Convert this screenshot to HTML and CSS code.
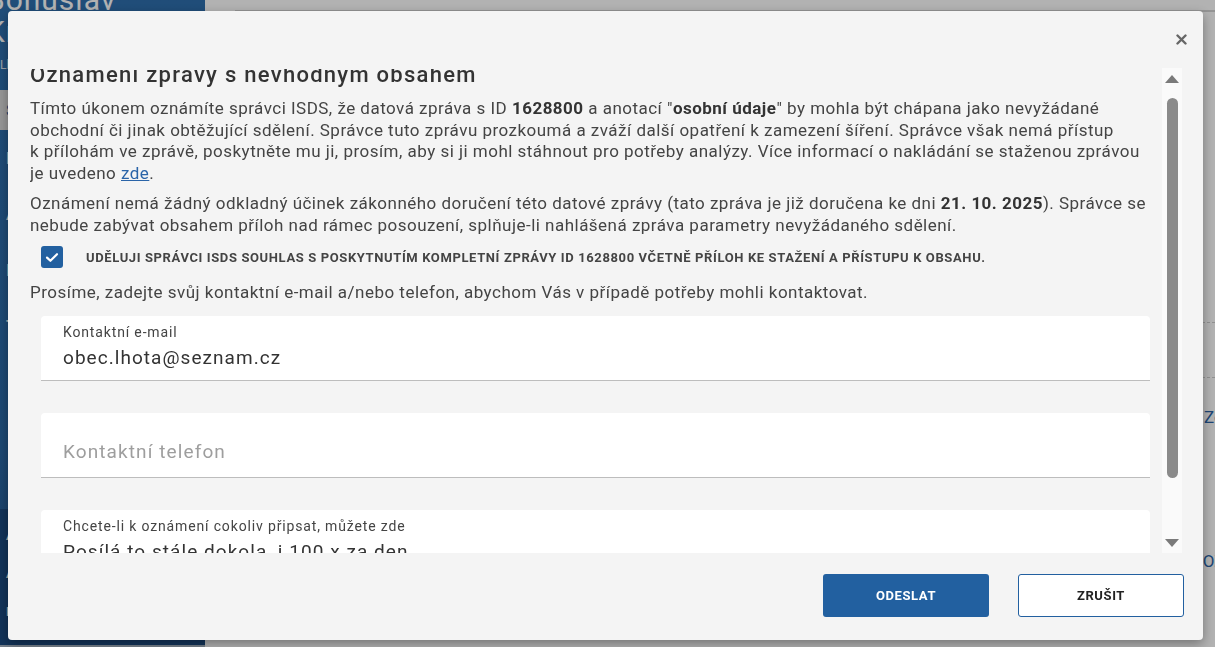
FILE: index.html
```html
<!DOCTYPE html>
<html lang="cs">
<head>
    <meta charset="UTF-8">
    <meta name="viewport" content="width=device-width, initial-scale=1.0">
    <title>Datová schránka - Oznámení zprávy</title>
    <link rel="stylesheet" href="styles.css">
</head>
<body>

<div class="app">
    <aside class="sidebar">
        <div class="user">
            <div class="user-name">Bohuslav<br>Kratochvíl</div>
            <div class="user-box">Lhota</div>
        </div>
        <div class="menu-item menu-item-light">SCHRÁNKA</div>
        <div class="menu-item">ÉHLED</div>
        <div class="menu-item">ARCHIV</div>
        <div class="menu-item">IMPORT</div>
        <div class="menu-item">TISK</div>
        <div class="sidebar-bottom">
            <div class="menu-item">ADRESÁŘ</div>
            <div class="menu-item">A NASTAVENÍ</div>
            <div class="menu-item">EXPORT</div>
        </div>
    </aside>
    <main class="main">
        <div class="topbar"></div>
        <div class="list">
            <div class="list-row"></div>
            <div class="list-row"></div>
            <div class="list-link">Zobrazit</div>
            <div class="list-link list-link-low">POŽADAVKY</div>
        </div>
    </main>
</div>

<div class="overlay">
    <div class="dialog">
        <div class="dialog-head">
            <button class="close-btn" title="Zavřít">
                <svg width="11" height="11" viewBox="0 0 11 11">
                    <path d="M1.5 1.5 L9.5 9.5 M9.5 1.5 L1.5 9.5" stroke="#666" stroke-width="2.4" stroke-linecap="round"/>
                </svg>
            </button>
        </div>

        <div class="dialog-body">
            <div class="scroll-view">
                <div class="scroll-content">
                    <h2>Oznámení zprávy s nevhodným obsahem</h2>
                    <p>Tímto úkonem oznámíte správci ISDS, že datová zpráva s&nbsp;ID <b>1628800</b> a&nbsp;anotací "<b>osobní údaje</b>" by mohla být chápana jako nevyžádané obchodní či jinak obtěžující sdělení. Správce tuto zprávu prozkoumá a&nbsp;zváží další opatření k&nbsp;zamezení šíření. Správce však nemá přístup k&nbsp;přílohám ve zprávě, poskytněte mu ji, prosím, aby si ji mohl stáhnout pro potřeby analýzy. Více informací o&nbsp;nakládání se staženou zprávou je uvedeno <a href="#">zde</a>.</p>
                    <p>Oznámení nemá žádný odkladný účinek zákonného doručení této datové zprávy (tato zpráva je již doručena ke dni <b>21. 10. 2025</b>). Správce se nebude zabývat obsahem příloh nad rámec posouzení, splňuje-li nahlášená zpráva parametry nevyžádaného sdělení.</p>

                    <label class="consent">
                        <span class="checkbox">
                            <svg width="14" height="11" viewBox="0 0 14 11">
                                <path d="M2 5.6 L5.4 8.8 L12 2.2" fill="none" stroke="#fff" stroke-width="2.2" stroke-linecap="round" stroke-linejoin="round"/>
                            </svg>
                        </span>
                        <span class="consent-text">Uděluji správci ISDS souhlas s poskytnutím kompletní zprávy ID 1628800 včetně příloh ke stažení a přístupu k obsahu.</span>
                    </label>

                    <p class="hint">Prosíme, zadejte svůj kontaktní e-mail a/nebo telefon, abychom Vás v&nbsp;případě potřeby mohli kontaktovat.</p>

                    <div class="field">
                        <div class="field-label">Kontaktní e-mail</div>
                        <div class="field-value">obec.lhota@seznam.cz</div>
                    </div>
                    <div class="field field-empty">
                        <div class="field-placeholder">Kontaktní telefon</div>
                    </div>
                    <div class="field">
                        <div class="field-label">Chcete-li k oznámení cokoliv připsat, můžete zde</div>
                        <div class="field-value">Posílá to stále dokola, i 100 x za den</div>
                    </div>
                </div>
            </div>

            <div class="scrollbar">
                <span class="arrow arrow-up"></span>
                <span class="thumb"></span>
                <span class="arrow arrow-down"></span>
            </div>
        </div>

        <div class="dialog-foot">
            <button class="btn btn-primary">Odeslat</button>
            <button class="btn btn-outline">Zrušit</button>
        </div>
    </div>
</div>

</body>
</html>
```

FILE: styles.css
```css
body {
    margin: 0;
    font-family: 'Roboto', 'Liberation Sans', sans-serif;
    background-color: #ffffff;
    overflow: hidden;
}

/* stránka pod dialogem */
.app {
    display: flex;
    height: 100vh;
}
.sidebar {
    width: 205px;
    flex-shrink: 0;
    background: linear-gradient(180deg, #2e6fae 0%, #2a67a4 70%, #1d4f86 100%);
    color: #ffffff;
    display: flex;
    flex-direction: column;
    overflow: hidden;
}
.user {
    margin-top: -16px;
    margin-left: -14px;
}
.user-name {
    font-size: 30px;
    line-height: 32px;
    letter-spacing: 1px;
}
.user-box {
    font-size: 12px;
    margin: 10px 0 0 14px;
    color: #dfe8f2;
}
.menu-item {
    padding: 0 6px;
    height: 56px;
    line-height: 56px;
    font-size: 17px;
    font-weight: 500;
    color: #ffffff;
}
.menu-item-light {
    background: #d9d9d9;
    color: #2a67a4;
    height: 40px;
    line-height: 40px;
    margin-top: 18px;
}
.sidebar-bottom {
    margin-top: auto;
    background: #1b4a80;
    padding: 8px 0 14px;
    border-bottom: 2px solid #a8b6c6;
}
.sidebar-bottom .menu-item {
    height: 38px;
    line-height: 38px;
    font-size: 13px;
}
.main {
    flex: 1;
    display: flex;
    flex-direction: column;
    overflow: hidden;
}
.topbar {
    height: 10px;
    border-bottom: 2px solid #d4d4d4;
    margin-left: 30px;
}
.list {
    margin-top: 256px;
}
.list-row {
    height: 54px;
    border-bottom: 1px dashed #cfcfcf;
}
.list-link {
    color: #2a64a8;
    font-size: 17px;
    white-space: nowrap;
    padding-left: 999px;
    height: 78px;
    line-height: 78px;
}
.list-link-low {
    margin-top: 66px;
    padding-left: 987px;
}

/* dialog */
.overlay {
    position: fixed;
    inset: 0;
    background: rgba(0, 0, 0, 0.3);
}
.dialog {
    position: absolute;
    left: 8px;
    top: 11px;
    width: 1195px;
    height: 629px;
    background: #f4f4f4;
    border-radius: 4px;
    box-shadow: 0 4px 12px rgba(0, 0, 0, 0.35);
    display: flex;
    flex-direction: column;
}
.dialog-head {
    height: 58px;
    display: flex;
    justify-content: flex-end;
    align-items: flex-start;
}
.close-btn {
    border: none;
    background: none;
    padding: 0;
    margin: 23px 16px 0 0;
    width: 11px;
    height: 11px;
    cursor: pointer;
    display: flex;
}
.dialog-body {
    height: 484px;
    display: flex;
    padding: 0 21px 0 22px;
}
.scroll-view {
    width: 1120px;
    overflow: hidden;
}
.scroll-content {
    margin-top: -8px;
    color: #444444;
}
h2 {
    margin: 0 0 9px;
    font-size: 22px;
    font-weight: 500;
    line-height: 28px;
    letter-spacing: 1.28px;
    color: #333333;
}
p {
    margin: 0 0 9px;
    font-size: 17px;
    line-height: 21.5px;
    letter-spacing: 0.48px;
}
p a {
    color: #2a64a8;
}
p b {
    color: #333333;
}
.consent {
    display: flex;
    align-items: center;
    gap: 23px;
    margin: 10px 0 14px 11px;
}
.checkbox {
    width: 22px;
    height: 22px;
    border-radius: 3px;
    background: #2260a0;
    display: flex;
    align-items: center;
    justify-content: center;
    flex-shrink: 0;
}
.consent-text {
    text-transform: uppercase;
    font-size: 13px;
    font-weight: 700;
    letter-spacing: 0.62px;
    color: #444444;
}
.hint {
    margin-bottom: 12px;
}
.field {
    margin: 0 0 32px 11px;
    background: #ffffff;
    border-radius: 4px 4px 0 0;
    border-bottom: 1px solid #bdbdbd;
    padding: 9px 22px 0;
    height: 55px;
}
.field-label {
    font-size: 14px;
    line-height: 15px;
    letter-spacing: 0.85px;
    color: #444444;
}
.field-value {
    margin-top: 7px;
    font-size: 19px;
    line-height: 22px;
    letter-spacing: 1.05px;
    color: #333333;
}
.field-empty {
    display: flex;
    align-items: flex-end;
}
.field-placeholder {
    font-size: 19px;
    line-height: 22px;
    letter-spacing: 1.1px;
    color: #9e9e9e;
    margin-bottom: 14px;
}

/* posuvník */
.scrollbar {
    margin: -1px 0 0 12px;
    width: 20px;
    background: #fafafa;
    display: flex;
    flex-direction: column;
    align-items: center;
    padding: 7px 0 6px;
}
.arrow {
    width: 0;
    height: 0;
    border-left: 7px solid transparent;
    border-right: 7px solid transparent;
}
.arrow-up {
    border-bottom: 8px solid #7a7a7a;
}
.arrow-down {
    border-top: 8px solid #7a7a7a;
    margin-top: auto;
}
.thumb {
    width: 11px;
    height: 380px;
    margin-top: 15px;
    border-radius: 6px;
    background: #8a8a8a;
}

.dialog-foot {
    flex: 1;
    display: flex;
    justify-content: flex-end;
    align-items: flex-start;
    gap: 29px;
    padding: 21px 19px 0 0;
}
.btn {
    width: 166px;
    height: 43px;
    border-radius: 3px;
    font-family: 'Roboto', 'Liberation Sans', sans-serif;
    font-size: 13px;
    font-weight: 700;
    letter-spacing: 0.6px;
    text-transform: uppercase;
    cursor: pointer;
}
.btn-primary {
    background: #2260a0;
    color: #ffffff;
    border: none;
}
.btn-outline {
    background: #ffffff;
    color: #222222;
    border: 1px solid #2260a0;
}
```
